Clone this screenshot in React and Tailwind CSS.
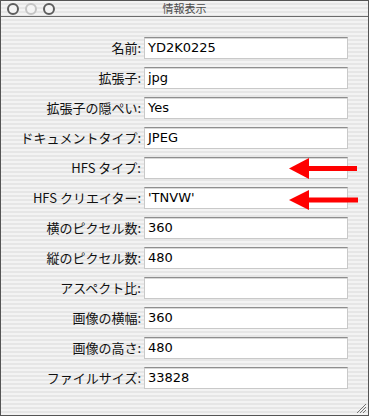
import React from "react";

const rows = [
  ["名前:", "YD2K0225"],
  ["拡張子:", "jpg"],
  ["拡張子の隠ぺい:", "Yes"],
  ["ドキュメントタイプ:", "JPEG"],
  ["HFS タイプ:", ""],
  ["HFS クリエイター:", "'TNVW'"],
  ["横のピクセル数:", "360"],
  ["縦のピクセル数:", "480"],
  ["アスペクト比:", ""],
  ["画像の横幅:", "360"],
  ["画像の高さ:", "480"],
  ["ファイルサイズ:", "33828"],
];

const stripes =
  "bg-[repeating-linear-gradient(to_bottom,#f3f3f3_0px,#f3f3f3_2px,#e6e6e6_2px,#e6e6e6_4px)]";

const Light = ({ faded }) => (
  <span
    className={
      "block w-[12px] h-[12px] rounded-full border-2 bg-[#f4f4f4] " +
      (faded ? "border-[#c4c4c4]" : "border-[#5e5e5e]")
    }
  />
);

export default function App() {
  return (
    <div
      className={`relative w-[369px] h-[416px] border border-[#555] ${stripes} overflow-hidden`}
      style={{ fontFamily: '"DejaVu Sans", "Noto Sans CJK JP", sans-serif' }}
    >
      {/* title bar */}
      <div className="relative h-[16px] border-b border-[#6b6b6b] flex items-center pl-[6px] gap-[6px]">
        <Light />
        <Light faded />
        <Light />
        <span
          className="absolute left-0 right-0 top-[1px] text-center text-[11px] leading-[13px] text-[#4a4a4a]"
          style={{ fontFamily: '"Noto Sans CJK JP", sans-serif' }}
        >
          情報表示
        </span>
      </div>

      {/* fields */}
      <div className="flex flex-col gap-[8px] pt-[20px]">
        {rows.map(([label, value]) => (
          <div key={label} className="flex items-center h-[22px]">
            <span
              className="w-[143px] pr-[3px] text-right text-[13px] text-[#111] whitespace-nowrap"
              style={{ fontFamily: '"Noto Sans CJK JP", sans-serif' }}
            >
              {label}
            </span>
            <div className="w-[204px] h-[22px] bg-white border border-[#c9c9c9] border-t-[#8e8e8e] shadow-[inset_0_1px_0_#d8d8d8] flex items-center pl-[3px] text-[13px] text-black">
              {value}
            </div>
          </div>
        ))}
      </div>

      {/* red arrows */}
      <svg className="absolute left-0 top-0" width="369" height="416">
        <rect x="305" y="165" width="51" height="5" fill="#ff0000" />
        <polygon points="288,167.5 308,157 308,178" fill="#ff0000" />
        <rect x="305" y="196.5" width="52" height="5" fill="#ff0000" />
        <polygon points="288,199 308,189 308,209" fill="#ff0000" />
      </svg>

      {/* resize grip */}
      <svg className="absolute right-[1px] bottom-[1px]" width="12" height="12">
        <line x1="11" y1="2" x2="2" y2="11" stroke="#777" />
        <line x1="11" y1="5" x2="5" y2="11" stroke="#777" />
        <line x1="11" y1="8" x2="8" y2="11" stroke="#777" />
      </svg>
    </div>
  );
}
